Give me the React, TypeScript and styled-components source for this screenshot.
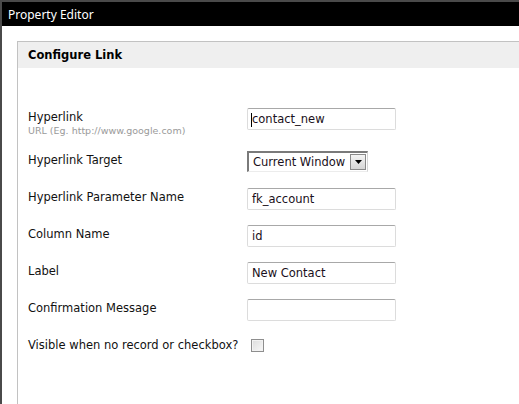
import React, { ReactElement } from 'react'
import styled, { createGlobalStyle } from 'styled-components'

const GlobalStyle = createGlobalStyle`
  html, body {
    margin: 0;
    padding: 0;
    background: #4a4a4a;
    overflow: hidden;
  }
`

const Window = styled.div`
  margin: 2px 0 0 2px;
  height: calc(100vh - 2px);
  background: #ffffff;
  display: flex;
  flex-direction: column;
  overflow: hidden;
`

const TitleBar = styled.div`
  height: 24px;
  flex-shrink: 0;
  background: #000000;
  color: #ffffff;
  font-family: 'Noto Sans', 'Open Sans', sans-serif;
  font-size: 12px;
  display: flex;
  align-items: center;
  padding-left: 6px;
`

const Content = styled.div`
  flex: 1;
  padding: 15px 0 0 15px;
  display: flex;
`

const Panel = styled.div`
  flex: 1;
  border: 1px solid #c2c2c2;
  border-right: none;
  border-bottom: none;
  display: flex;
  flex-direction: column;
`

const PanelHeader = styled.div`
  height: 26px;
  background: #efefef;
  display: flex;
  align-items: center;
  padding-left: 10px;
  font-family: 'DejaVu Sans', Verdana, sans-serif;
  font-size: 11.5px;
  font-weight: bold;
  color: #000000;
`

const Form = styled.div`
  padding: 40px 0 0 10px;
  display: flex;
  flex-direction: column;
  font-family: 'DejaVu Sans', Verdana, sans-serif;
  font-size: 11.5px;
  color: #111111;
`

const Row = styled.div<{ $height?: number }>`
  display: grid;
  grid-template-columns: 219px 1fr;
  align-items: start;
  height: ${(p) => p.$height ?? 37}px;
`

const LabelBlock = styled.div`
  display: flex;
  flex-direction: column;
  line-height: 14px;
  padding-top: 2px;
`

const Hint = styled.span`
  font-size: 9.5px;
  line-height: 12px;
  color: #9a9a9a;
  margin-top: 1px;
`

const TextBox = styled.div<{ $caret?: boolean }>`
  width: 149px;
  height: 22px;
  box-sizing: border-box;
  border: 1px solid #dcdcdc;
  border-top-color: #a8a8a8;
  border-radius: 2px;
  padding-left: 4px;
  display: flex;
  align-items: center;
  color: #1a1020;
  position: relative;
  ${(p) =>
    p.$caret &&
    `
    &::before {
      content: '';
      position: absolute;
      left: 3px;
      top: 4px;
      width: 1px;
      height: 14px;
      background: #000;
    }
  `}
`

const SelectBox = styled.div`
  width: 121px;
  height: 21px;
  box-sizing: border-box;
  border-top: 2px solid #7a7a7a;
  border-left: 2px solid #7a7a7a;
  border-right: 1px solid #d4d4d4;
  border-bottom: 1px solid #ececec;
  display: flex;
  align-items: center;
  justify-content: space-between;
  padding: 0 1px 0 4px;
  color: #1a1020;
`

const DropButton = styled.div`
  width: 16px;
  height: 16px;
  box-sizing: border-box;
  border: 1px solid #8a8a8a;
  background: linear-gradient(#f4f4f4, #d6d6d6);
  display: flex;
  align-items: center;
  justify-content: center;
`

const CheckBox = styled.div`
  width: 13px;
  height: 13px;
  box-sizing: border-box;
  margin: 3px 0 0 4px;
  border: 1px solid #8e8e8e;
  background: linear-gradient(135deg, #dcdcdc, #f8f8f8);
  box-shadow: inset 0 0 0 1px #f2f2f2;
`

const fields = [
  { label: 'Hyperlink Parameter Name', value: 'fk_account' },
  { label: 'Column Name', value: 'id' },
  { label: 'Label', value: 'New Contact' },
  { label: 'Confirmation Message', value: '' },
]

const App = (): ReactElement => {
  return (
    <>
      <GlobalStyle />
      <Window>
        <TitleBar>Property Editor</TitleBar>
        <Content>
          <Panel>
            <PanelHeader>Configure Link</PanelHeader>
            <Form>
              <Row $height={43}>
                <LabelBlock>
                  <span>Hyperlink</span>
                  <Hint>URL (Eg. http://www.google.com)</Hint>
                </LabelBlock>
                <TextBox $caret>contact_new</TextBox>
              </Row>
              <Row>
                <LabelBlock>Hyperlink Target</LabelBlock>
                <SelectBox>
                  <span>Current Window</span>
                  <DropButton>
                    <svg width="7" height="4" viewBox="0 0 7 4">
                      <path d="M0 0h7L3.5 4z" fill="#000" />
                    </svg>
                  </DropButton>
                </SelectBox>
              </Row>
              {fields.map((f) => (
                <Row key={f.label}>
                  <LabelBlock>{f.label}</LabelBlock>
                  <TextBox>{f.value}</TextBox>
                </Row>
              ))}
              <Row>
                <LabelBlock>Visible when no record or checkbox?</LabelBlock>
                <CheckBox />
              </Row>
            </Form>
          </Panel>
        </Content>
      </Window>
    </>
  )
}

export default App
